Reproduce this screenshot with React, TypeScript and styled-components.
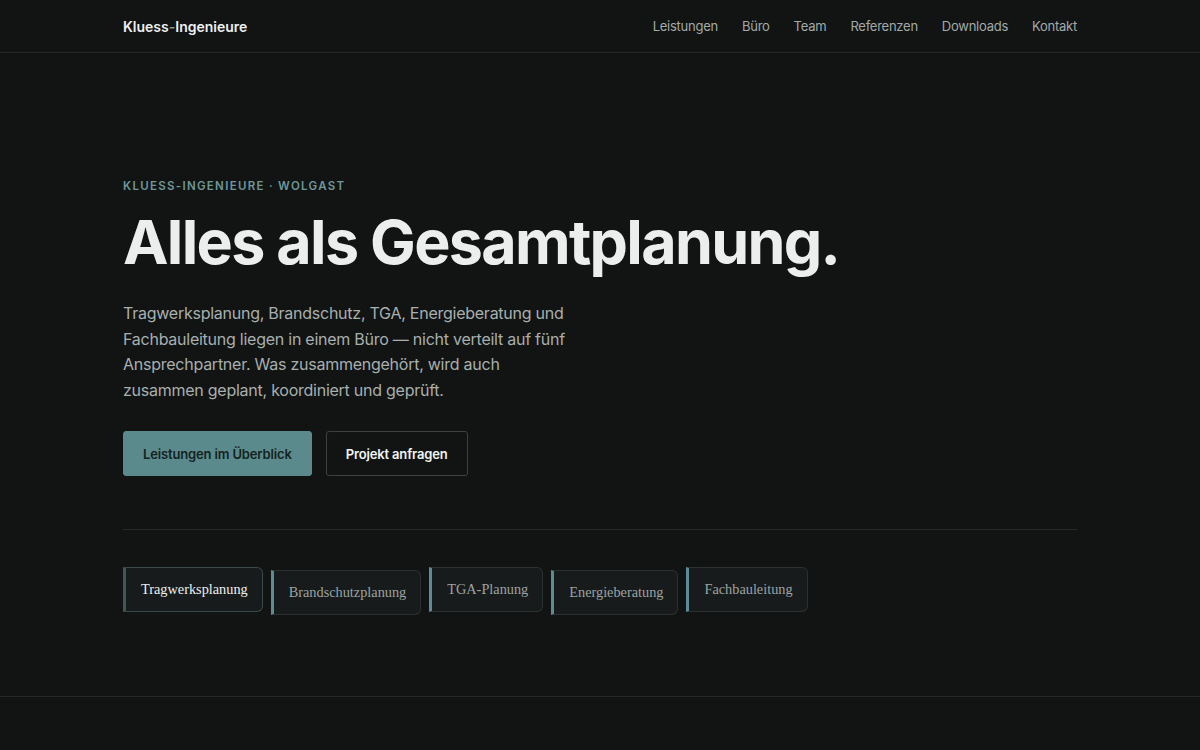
import React from "react";
import styled, { createGlobalStyle } from "styled-components";

const GlobalStyle = createGlobalStyle`
  * { box-sizing: border-box; }
  body {
    margin: 0;
    background: #111413;
    color: #e8eaea;
    font-family: Inter, "Noto Sans", sans-serif;
  }
`;

const Page = styled.div`
  min-height: 750px;
  background: #111413;
`;

const Header = styled.header`
  height: 53px;
  border-bottom: 1px solid #242827;
`;

const Inner = styled.div`
  width: 954px;
  margin: 0 auto;
`;

const HeaderBar = styled(Inner)`
  height: 100%;
  display: flex;
  align-items: center;
  justify-content: space-between;
`;

const Logo = styled.a`
  font-size: 14px;
  font-weight: 600;
  color: #eef0f0;
  letter-spacing: 0;
  span { color: #8a9291; }
`;

const Nav = styled.nav`
  display: flex;
  gap: 24px;
`;

const NavLink = styled.a`
  font-size: 13px;
  letter-spacing: -0.25px;
  color: #a3aaa9;
`;

const Hero = styled.section`
  padding: 126px 0 81px;
  border-bottom: 1px solid #242827;
`;

const Eyebrow = styled.div`
  font-size: 11.5px;
  font-weight: 600;
  letter-spacing: 1.3px;
  color: #6e9799;
  text-transform: uppercase;
`;

const Title = styled.h1`
  margin: 16px 0 0;
  font-size: 61px;
  line-height: 1.1;
  font-weight: 700;
  letter-spacing: -1.7px;
  color: #eceeed;
`;

const Lead = styled.p`
  margin: 25px 0 0;
  width: 450px;
  font-size: 16px;
  letter-spacing: -0.25px;
  line-height: 25.6px;
  color: #a8afae;
`;

const Actions = styled.div`
  display: flex;
  gap: 14px;
  margin-top: 28px;
`;

const Button = styled.a<{ $primary?: boolean }>`
  height: 45px;
  padding: 0 19px;
  display: inline-flex;
  align-items: center;
  border-radius: 3px;
  font-size: 13px;
  letter-spacing: -0.15px;
  font-weight: 600;
  background: ${(p) => (p.$primary ? "#5b8a8c" : "transparent")};
  color: ${(p) => (p.$primary ? "#142221" : "#f2f4f4")};
  border: 1px solid ${(p) => (p.$primary ? "#5b8a8c" : "#3a4140")};
`;

const Divider = styled.hr`
  margin: 53px 0 0;
  border: 0;
  border-top: 1px solid #272c2b;
`;

const Chips = styled.div`
  display: flex;
  gap: 8px;
  margin-top: 37px;
  align-items: flex-start;
`;

const Chip = styled.div<{ $active?: boolean; $low?: boolean }>`
  height: 45px;
  padding: 0 14px 0 15px;
  display: inline-flex;
  align-items: center;
  margin-top: ${(p) => (p.$low ? "3px" : "0")};
  border-radius: 0 6px 6px 0;
  background: #171b1b;
  border: 1px solid ${(p) => (p.$active ? "#394a4b" : "#2b3131")};
  border-left: 3px solid ${(p) => (p.$active ? "#3d5859" : "#5d8c92")};
  font-family: "Liberation Serif", "DejaVu Serif", serif;
  font-size: 14.3px;
  color: ${(p) => (p.$active ? "#eef0ef" : "#9ca3a2")};
`;

const services = [
  "Tragwerksplanung",
  "Brandschutzplanung",
  "TGA-Planung",
  "Energieberatung",
  "Fachbauleitung",
];

export default function App() {
  return (
    <Page>
      <GlobalStyle />
      <Header>
        <HeaderBar>
          <Logo>
            Kluess<span>-</span>Ingenieure
          </Logo>
          <Nav>
            {["Leistungen", "Büro", "Team", "Referenzen", "Downloads", "Kontakt"].map((n) => (
              <NavLink key={n}>{n}</NavLink>
            ))}
          </Nav>
        </HeaderBar>
      </Header>
      <Hero>
        <Inner>
          <Eyebrow>Kluess-Ingenieure · Wolgast</Eyebrow>
          <Title>Alles als Gesamtplanung.</Title>
          <Lead>
            Tragwerksplanung, Brandschutz, TGA, Energieberatung und Fachbauleitung liegen in
            einem Büro — nicht verteilt auf fünf Ansprechpartner. Was zusammengehört, wird auch
            zusammen geplant, koordiniert und geprüft.
          </Lead>
          <Actions>
            <Button $primary>Leistungen im Überblick</Button>
            <Button>Projekt anfragen</Button>
          </Actions>
          <Divider />
          <Chips>
            {services.map((s, i) => (
              <Chip key={s} $active={i === 0} $low={i % 2 === 1}>
                {s}
              </Chip>
            ))}
          </Chips>
        </Inner>
      </Hero>
    </Page>
  );
}
